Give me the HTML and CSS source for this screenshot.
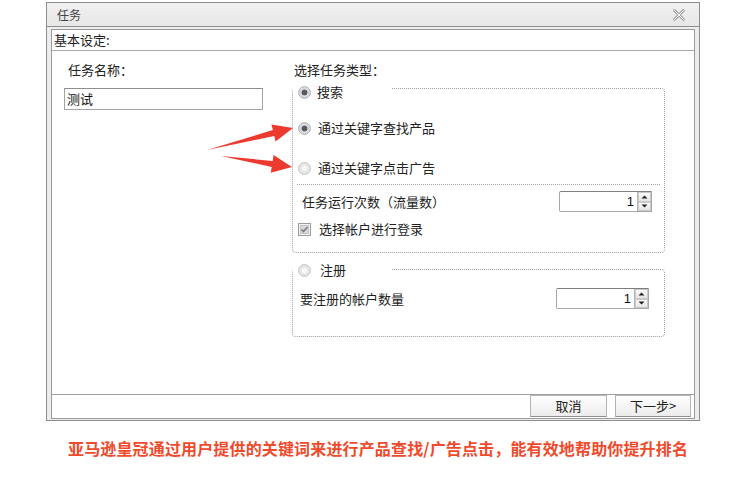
FILE: index.html
```html
<!DOCTYPE html>
<html lang="zh-CN">
<head>
<meta charset="utf-8">
<title>任务</title>
<link rel="stylesheet" href="styles.css">
</head>
<body>
<div class="page">
  <div class="window">
    <div class="titlebar">
      <span class="title">任务</span>
      <svg class="close" width="14" height="14" viewBox="0 0 14 14">
        <path d="M2.5 2.5 L11.5 11.5 M11.5 2.5 L2.5 11.5" stroke="#a4a4a4" stroke-width="2.8" stroke-linecap="round"/>
        <path d="M2.5 2.5 L11.5 11.5 M11.5 2.5 L2.5 11.5" stroke="#fafafa" stroke-width="1" stroke-linecap="round"/>
      </svg>
    </div>
    <div class="frame">
      <div class="client">
        <div class="section-head">基本设定:</div>
        <div class="content">
          <div class="col-left">
            <div class="label label-name">任务名称：</div>
            <div class="textbox">测试</div>
          </div>
          <div class="col-right">
            <div class="label label-type">选择任务类型：</div>
            <div class="group group-search">
              <div class="legend legend-search">
                <svg class="radio" width="13" height="13" viewBox="0 0 13 13"><circle cx="6.5" cy="6.5" r="5.8" fill="#ececec" stroke="#a2a2a2"/><circle cx="6.5" cy="6.5" r="4.2" fill="#f7f7f7" stroke="#c9cfe0"/><circle cx="6.5" cy="6.5" r="3" fill="#5a5a5a"/></svg>
                <span>搜索</span>
              </div>
              <div class="opt opt-first">
                <svg class="radio" width="13" height="13" viewBox="0 0 13 13"><circle cx="6.5" cy="6.5" r="5.8" fill="#ececec" stroke="#a2a2a2"/><circle cx="6.5" cy="6.5" r="4.2" fill="#f7f7f7" stroke="#c9cfe0"/><circle cx="6.5" cy="6.5" r="3" fill="#5a5a5a"/></svg>
                <span>通过关键字查找产品</span>
              </div>
              <div class="opt opt-second">
                <svg class="radio" width="13" height="13" viewBox="0 0 13 13"><circle cx="6.5" cy="6.5" r="5.8" fill="#efefef" stroke="#b8b8b8"/><circle cx="6.5" cy="6.5" r="3.6" fill="#fafafa" stroke="#dcdcdc"/></svg>
                <span>通过关键字点击广告</span>
              </div>
              <div class="sep"></div>
              <div class="spin-row spin-row-run">
                <span>任务运行次数（流量数）</span>
                <div class="spin">
                  <span class="spin-val">1</span>
                  <div class="spin-btns">
                    <div class="spin-btn"><svg width="7" height="4" viewBox="0 0 7 4"><path d="M0.5 3.5 L3.5 0.5 L6.5 3.5 Z" fill="#222"/></svg></div>
                    <div class="spin-btn"><svg width="7" height="4" viewBox="0 0 7 4"><path d="M0.5 0.5 L3.5 3.5 L6.5 0.5 Z" fill="#222"/></svg></div>
                  </div>
                </div>
              </div>
              <div class="check-row">
                <svg class="checkbox" width="13" height="13" viewBox="0 0 13 13"><rect x="0.5" y="0.5" width="12" height="12" fill="#f2f2f2" stroke="#9c9c9c"/><rect x="2.5" y="2.5" width="8" height="8" fill="#d9d9d9" stroke="#c4c4c4"/><path d="M3.5 6.5 L5.5 8.5 L9.5 4" stroke="#7a7a7a" stroke-width="1.6" fill="none"/></svg>
                <span>选择帐户进行登录</span>
              </div>
            </div>
            <div class="group group-reg">
              <div class="legend legend-reg">
                <svg class="radio" width="13" height="13" viewBox="0 0 13 13"><circle cx="6.5" cy="6.5" r="5.8" fill="#efefef" stroke="#b8b8b8"/><circle cx="6.5" cy="6.5" r="3.6" fill="#fafafa" stroke="#dcdcdc"/></svg>
                <span>注册</span>
              </div>
              <div class="spin-row spin-row-reg">
                <span>要注册的帐户数量</span>
                <div class="spin">
                  <span class="spin-val">1</span>
                  <div class="spin-btns">
                    <div class="spin-btn"><svg width="7" height="4" viewBox="0 0 7 4"><path d="M0.5 3.5 L3.5 0.5 L6.5 3.5 Z" fill="#222"/></svg></div>
                    <div class="spin-btn"><svg width="7" height="4" viewBox="0 0 7 4"><path d="M0.5 0.5 L3.5 3.5 L6.5 0.5 Z" fill="#222"/></svg></div>
                  </div>
                </div>
              </div>
            </div>
          </div>
        </div>
        <div class="footer">
          <button class="btn btn-cancel">取消</button>
          <button class="btn btn-next">下一步&gt;</button>
        </div>
      </div>
    </div>
  </div>
  <p class="caption">亚马逊皇冠通过用户提供的关键词来进行产品查找/广告点击，能有效地帮助你提升排名</p>
  <svg class="arrows" width="752" height="482" viewBox="0 0 752 482">
    <polygon points="207,150 274.3,135.9 275.6,141.5 293,128 271.4,124.5 272.9,130.1" fill="#ec3a2e"/>
    <polygon points="221,156 272.7,160.9 273.6,155 292,167 270.8,172.8 271.7,166.9" fill="#ec3a2e"/>
  </svg>
</div>
</body>
</html>
```

FILE: styles.css
```css
* { box-sizing: border-box; }

html, body {
  margin: 0;
  padding: 0;
  background: #ffffff;
}

body {
  font-family: "Noto Sans CJK SC", "Noto Sans", sans-serif;
  font-size: 13px;
  color: #222;
}

.page {
  position: relative;
  width: 752px;
  height: 482px;
  padding-top: 2px;
  overflow: hidden;
}

.window {
  margin-left: 46px;
  width: 654px;
  height: 419px;
  border: 1px solid #8d8d8d;
  background: #eeeeee;
  display: flex;
  flex-direction: column;
}

.titlebar {
  height: 24px;
  flex: none;
  background: linear-gradient(#f1f1f1, #e7e7e7);
  border-bottom: 1px solid #8e8e8e;
  display: flex;
  align-items: center;
  padding-left: 10px;
  padding-right: 13px;
}

.title {
  font-size: 12px;
  line-height: 14px;
  color: #444;
}

.close {
  margin-left: auto;
  display: block;
}

.frame {
  flex: 1;
  display: flex;
  padding: 2px 4px 1px 4px;
  background: #ededed;
}

.client {
  flex: 1;
  display: flex;
  flex-direction: column;
  background: #ffffff;
  border: 1px solid #9a9a9a;
}

.section-head {
  height: 21px;
  flex: none;
  border-bottom: 1px solid #a8a8a8;
  padding-left: 2px;
  display: flex;
  align-items: center;
  line-height: 16px;
  color: #222;
}

.content {
  flex: 1;
  display: flex;
  padding-top: 11px;
}

.col-left {
  width: 240px;
  flex: none;
  padding-left: 12px;
}

.label {
  height: 16px;
  line-height: 16px;
  color: #222;
}

.label-name {
  margin-left: 4px;
}

.label-type {
  margin-left: 2px;
}

.textbox {
  margin-top: 10px;
  width: 199px;
  height: 22px;
  border: 1px solid #a3a3a3;
  border-top-color: #8f8f8f;
  padding-left: 2px;
  line-height: 20px;
  color: #111;
}

.col-right {
  width: 373px;
  flex: none;
}

.group {
  position: relative;
  border: 1px dotted #9e9e9e;
  border-radius: 4px;
  display: flex;
  flex-direction: column;
}

.group-search {
  margin-top: 10px;
  height: 165px;
  padding-top: 29px;
}

.group-reg {
  margin-top: 16px;
  height: 68px;
  padding-top: 18px;
}

.legend {
  position: absolute;
  left: 0;
  width: 98px;
  height: 14px;
  background: #ffffff;
  display: flex;
  align-items: center;
  padding-left: 5px;
  line-height: 14px;
}

.legend-search { top: -4px; }
.legend-reg { top: -7px; }

.legend-search span { margin-left: 6px; }
.legend-reg span { margin-left: 9px; }

.radio, .checkbox {
  display: block;
  flex: none;
}

.opt {
  height: 20px;
  display: flex;
  align-items: center;
  padding-left: 5px;
  line-height: 16px;
}

.opt span { margin-left: 7px; }

.opt-second { margin-top: 20px; }

.sep {
  margin: 6px 4px 0 4px;
  border-top: 1px dotted #a6a6a6;
}

.spin-row {
  display: flex;
  align-items: center;
  justify-content: space-between;
  line-height: 16px;
}

.spin-row-run {
  margin-top: 6px;
  padding-left: 9px;
  padding-right: 12px;
}

.spin-row-reg {
  padding-left: 7px;
  padding-right: 15px;
}

.spin {
  width: 93px;
  height: 21px;
  border: 1px solid #a7a7a7;
  border-top-color: #7e7e7e;
  border-radius: 2px 0 0 2px;
  display: flex;
  align-items: stretch;
  background: #fff;
}

.spin-val {
  flex: 1;
  text-align: right;
  padding-right: 3px;
  line-height: 19px;
  font-family: "Liberation Sans", sans-serif;
  font-size: 13px;
  color: #111;
}

.spin-btns {
  width: 14px;
  display: flex;
  flex-direction: column;
  border-left: 1px solid #b5b5b5;
}

.spin-btn {
  flex: 1;
  display: flex;
  align-items: center;
  justify-content: center;
  background: linear-gradient(#fbfbfb, #e4e4e4);
  border: 1px solid #c9c9c9;
}

.spin-btn svg { display: block; }

.check-row {
  margin-top: 10px;
  height: 14px;
  display: flex;
  align-items: center;
  padding-left: 5px;
  line-height: 14px;
}

.check-row span { margin-left: 8px; }

.footer {
  height: 24px;
  flex: none;
  border-top: 1px solid #a0a0a0;
  display: flex;
  justify-content: flex-end;
  align-items: stretch;
  gap: 8px;
  padding: 0 3px 1px 0;
}

.btn {
  margin: 0;
  width: 77px;
  font-family: "Noto Sans CJK SC", sans-serif;
  font-size: 13px;
  line-height: 16px;
  color: #222;
  background: linear-gradient(#ffffff, #ececec);
  border: 1px solid #b3b3b3;
  border-bottom-color: #8f8f8f;
  border-radius: 0;
  padding: 0;
}

.btn-next {
  width: 76px;
}

.caption {
  margin: 17px 0 0 68px;
  font-family: "Noto Sans CJK SC", sans-serif;
  font-weight: bold;
  font-size: 16px;
  line-height: 20px;
  letter-spacing: 0.15px;
  color: #f04a2d;
  white-space: nowrap;
}

.arrows {
  position: absolute;
  left: 0;
  top: 0;
  pointer-events: none;
}
```
